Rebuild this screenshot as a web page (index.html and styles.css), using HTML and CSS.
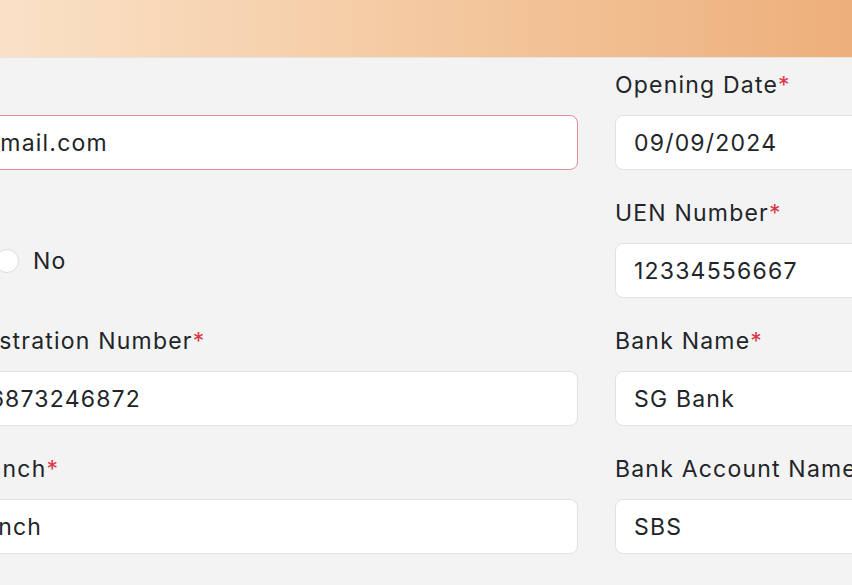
FILE: index.html
```html
<!DOCTYPE html>
<html lang="en">
<head>
<meta charset="utf-8">
<title>Company Details</title>
<link rel="stylesheet" href="styles.css">
</head>
<body>
<div class="page">
  <header class="topbar"></header>
  <main class="form">
    <div class="grid">
      <div class="field">
        <label class="label">Email<span class="req">*</span></label>
        <input class="control invalid" type="text" value="info@gmail.com" readonly>
      </div>
      <div class="field">
        <label class="label">Opening Date<span class="req">*</span></label>
        <input class="control" type="text" value="09/09/2024" readonly>
      </div>

      <div class="field">
        <label class="label">Status</label>
        <div class="radios">
          <span class="radio-opt"><span class="radio"></span>Yes</span>
          <span class="radio-opt"><span class="radio"></span>No</span>
        </div>
      </div>
      <div class="field">
        <label class="label">UEN Number<span class="req">*</span></label>
        <input class="control" type="text" value="12334556667" readonly>
      </div>

      <div class="field">
        <label class="label">Tax Registration Number<span class="req">*</span></label>
        <input class="control" type="text" value="2024-6873246872" readonly>
      </div>
      <div class="field">
        <label class="label">Bank Name<span class="req">*</span></label>
        <input class="control" type="text" value="SG Bank" readonly>
      </div>

      <div class="field">
        <label class="label">Main Branch<span class="req">*</span></label>
        <input class="control" type="text" value="SG Branch" readonly>
      </div>
      <div class="field">
        <label class="label">Bank Account Name<span class="req">*</span></label>
        <input class="control" type="text" value="SBS" readonly>
      </div>
    </div>
  </main>
</div>
</body>
</html>
```

FILE: styles.css
```css
html, body {
  margin: 0;
  padding: 0;
  background: #f3f3f3;
  overflow: hidden;
}

.page {
  width: 852px;
  height: 585px;
  overflow: hidden;
  font-family: "Inter", "Open Sans", sans-serif;
  color: #212529;
}

.topbar {
  height: 57px;
  background: linear-gradient(to right, #fae1c7 0%, #f4c9a0 50%, #edaf7b 100%);
  border-bottom: 1px solid #e4e4e4;
}

.form {
  padding-top: 10px;
}

.grid {
  display: grid;
  grid-template-columns: 681px 681px;
  column-gap: 37px;
  margin-left: -103px;
}

.field {
  display: flex;
  flex-direction: column;
  margin-bottom: 26px;
}

.label {
  font-size: 23px;
  letter-spacing: 1.2px;
  line-height: 34px;
  margin-bottom: 13px;
  white-space: nowrap;
}

.req {
  color: #dc3545;
  letter-spacing: 0;
}

.control {
  box-sizing: border-box;
  height: 55px;
  width: 100%;
  margin: 0;
  padding: 0 18px;
  border: 1px solid #dee2e6;
  border-radius: 8px;
  background: #fff;
  font: inherit;
  font-size: 23px;
  letter-spacing: 1.2px;
  color: #212529;
  outline: none;
}

.control.invalid {
  border-color: #e58c93;
}

.radios {
  display: flex;
  align-items: center;
  gap: 17px;
  height: 36px;
  font-size: 23px;
  letter-spacing: 1.2px;
}

.radio-opt {
  display: inline-flex;
  align-items: center;
  gap: 14px;
}

.radio {
  box-sizing: border-box;
  width: 24px;
  height: 24px;
  border-radius: 50%;
  border: 1px solid #dcdcdc;
  background: #fff;
}
```
